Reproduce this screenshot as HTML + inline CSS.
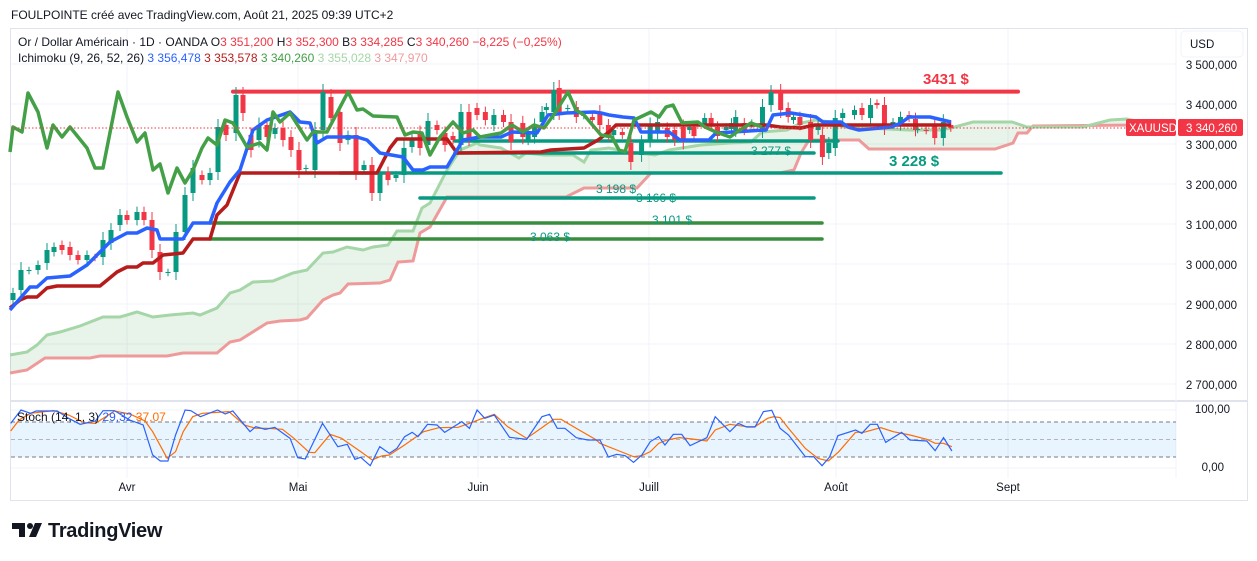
<!DOCTYPE html>
<html><head><meta charset="utf-8">
<style>
html,body{margin:0;padding:0;background:#fff;width:1257px;height:561px;overflow:hidden;font-family:"Liberation Sans",sans-serif;}
svg text{font-family:"Liberation Sans",sans-serif;}
</style></head><body>
<svg id="s" width="1257" height="561" viewBox="0 0 1257 561" xmlns="http://www.w3.org/2000/svg">
<text x="11" y="19" font-size="12" fill="#131722">FOULPOINTE créé avec TradingView.com, Août 21, 2025 09:39 UTC+2</text>
<rect x="10.5" y="28.5" width="1237" height="472" fill="#fff" stroke="#e0e3eb"/>
<g stroke="#f0f3fa" stroke-width="1">
<line x1="127" y1="29" x2="127" y2="478"/><line x1="298" y1="29" x2="298" y2="478"/><line x1="478" y1="29" x2="478" y2="478"/><line x1="649" y1="29" x2="649" y2="478"/><line x1="836" y1="29" x2="836" y2="478"/><line x1="1008" y1="29" x2="1008" y2="478"/>
<line x1="11" y1="64" x2="1176" y2="64"/><line x1="11" y1="104" x2="1176" y2="104"/><line x1="11" y1="144" x2="1176" y2="144"/><line x1="11" y1="184" x2="1176" y2="184"/><line x1="11" y1="224" x2="1176" y2="224"/><line x1="11" y1="264" x2="1176" y2="264"/><line x1="11" y1="304" x2="1176" y2="304"/><line x1="11" y1="344" x2="1176" y2="344"/><line x1="11" y1="384" x2="1176" y2="384"/>
<line x1="11" y1="410" x2="1176" y2="410"/><line x1="11" y1="468" x2="1176" y2="468"/>
</g>
<line x1="11" y1="401" x2="1247" y2="401" stroke="#e0e3eb" stroke-width="2"/>
<line x1="1176" y1="29" x2="1176" y2="478" stroke="#f0f3fa"/>
<g id="cloud"></g>
<g id="hl"></g>
<g id="cd"></g>
<g id="ln"></g>
<!-- stoch band -->
<rect x="11" y="422" width="1165" height="35" fill="rgba(33,150,243,0.1)"/>
<g stroke="#787b86" stroke-dasharray="4,3" stroke-width="1">
<line x1="11" y1="422" x2="1176" y2="422"/><line x1="11" y1="439.5" x2="1176" y2="439.5" stroke="#b2b5be"/><line x1="11" y1="457" x2="1176" y2="457"/>
</g>
<g id="st"></g>
<!-- price line -->
<line x1="11" y1="128" x2="1127" y2="128" stroke="#f23645" stroke-dasharray="1.5,2" stroke-width="1"/>
<rect x="1126" y="119" width="50" height="17" rx="2" fill="#f23645"/>
<text x="1129" y="132" font-size="11.5" fill="#fff">XAUUSD</text>
<rect x="1178" y="119" width="65" height="17" rx="2" fill="#f23645"/>
<text x="1186" y="132" font-size="11.5" fill="#fff">3 340,260</text>
<!-- axis -->
<rect x="1181" y="31" width="62" height="26" rx="4" fill="#fff" stroke="#f0f3fa"/>
<text x="1190" y="48" font-size="11.5" fill="#131722">USD</text>
<g font-size="11.5" fill="#131722" text-anchor="end">
<text x="1237" y="69">3 500,000</text><text x="1237" y="109">3 400,000</text><text x="1237" y="149">3 300,000</text><text x="1237" y="189">3 200,000</text><text x="1237" y="229">3 100,000</text><text x="1237" y="269">3 000,000</text><text x="1237" y="309">2 900,000</text><text x="1237" y="349">2 800,000</text><text x="1237" y="389">2 700,000</text>
<text x="1230" y="413">100,00</text><text x="1224" y="471">0,00</text>
</g>
<g font-size="11.5" fill="#131722" text-anchor="middle">
<text x="127" y="491">Avr</text><text x="298" y="491">Mai</text><text x="478" y="491">Juin</text><text x="649" y="491">Juill</text><text x="836" y="491">Août</text><text x="1008" y="491">Sept</text>
</g>
<!-- legend -->
<g font-size="12">
<text x="18" y="46" fill="#131722">Or / Dollar Américain · 1D · OANDA <tspan>O</tspan><tspan fill="#f23645">3 351,200</tspan> H<tspan fill="#f23645">3 352,300</tspan> B<tspan fill="#f23645">3 334,285</tspan> C<tspan fill="#f23645">3 340,260</tspan> <tspan fill="#f23645">−8,225 (−0,25%)</tspan></text>
<text x="18" y="62" fill="#131722">Ichimoku (9, 26, 52, 26) <tspan fill="#2962ff">3 356,478</tspan> <tspan fill="#b71c1c">3 353,578</tspan> <tspan fill="#43a047">3 340,260</tspan> <tspan fill="#a5d6a7">3 355,028</tspan> <tspan fill="#ef9a9a">3 347,970</tspan></text>
<text x="17" y="421" fill="#131722">Stoch (14, 1, 3) <tspan fill="#2962ff">29,32</tspan> <tspan fill="#ff6d00">37,07</tspan></text>
</g>
<!-- labels -->
<text x="923" y="84" font-size="15" font-weight="bold" fill="#f23645">3431 $</text>
<text x="889" y="166" font-size="15" font-weight="bold" fill="#089981">3 228 $</text>
<g font-size="12" fill="#089981">
<text x="751" y="155">3 277 $</text><text x="596" y="193">3 198 $</text><text x="636" y="202">3 166 $</text><text x="652" y="224">3 101 $</text><text x="530" y="241">3 063 $</text>
</g>
<!-- logo -->
<path d="M12 523h13v14h-6v-8h-7z" fill="#131722"/><circle cx="30" cy="526" r="3" fill="#131722"/><path d="M35 523h7l-6 14h-7z" fill="#131722"/>
<text x="48" y="537" font-size="20" font-weight="bold" fill="#131722" letter-spacing="-0.3">TradingView</text>
</svg>
<script>
var NS="http://www.w3.org/2000/svg";
function el(g,t,a){var e=document.createElementNS(NS,t);for(var k in a)e.setAttribute(k,a[k]);document.getElementById(g).appendChild(e);return e;}
function pts(a){var s=[];for(var i=0;i<a.length;i+=2)s.push(a[i]+","+a[i+1]);return s.join(" ");}
var A=[10,355,27,352,37,345,47,335,60,332,80,326,103,317,120,317,137,312,153,317,170,315,193,313,200,315,217,308,230,293,240,290,253,282,273,281,293,273,307,270,323,253,333,252,347,247,363,250,373,247,388,245,397,231,413,231,422,208,430,203,447,170,460,150,477,143,480,145,501,148,519,158,526,153,544,155,573,155,584,162,591,150,609,148,630,152,655,155,669,150,701,145,730,143,751,142,762,132,787,130,801,123,816,120,830,122,844,127,909,130,941,130,951,128,973,122,1012,122,1027,127,1083,127,1110,120,1127,119,1140,122];
var B=[10,373,27,370,45,358,90,358,100,356,167,356,183,353,217,353,230,342,240,340,267,323,280,321,300,320,307,318,323,300,333,295,340,293,348,284,380,283,390,280,398,262,413,261,420,233,430,227,447,197,480,197,566,197,584,188,637,188,651,173,780,173,794,170,801,153,809,140,859,140,869,149,995,149,1013,143,1018,133,1027,133,1033,126,1140,125];
var poly=A.slice();for(var i=B.length-2;i>=0;i-=2)poly.push(B[i],B[i+1]);
el("cloud","polygon",{points:pts(poly),fill:"rgba(67,160,71,0.12)"});
el("cloud","polyline",{points:pts(B),fill:"none",stroke:"#ef9a9a","stroke-width":3});
el("cloud","polyline",{points:pts(A),fill:"none",stroke:"#a5d6a7","stroke-width":3});
// horizontal lines
[[233,91.6,1018,"#f23645"],[455,141,838,"#089981"],[455,153,814,"#089981"],[340,173,1001,"#089981"],[420,198,814,"#089981"],[210,223,822,"#388e3c"],[210,239,822,"#388e3c"]].forEach(function(l){el("hl","line",{x1:l[0],y1:l[1],x2:l[2],y2:l[1],stroke:l[3],"stroke-width":l[3]=="#f23645"?4:3.5,"stroke-linecap":"round"});});
// candles [x,top,bottom,green]
var C=[[13,293,300,1],[21,270,290,1],[29,270,271,1],[38,265,270,1],[47,250,263,1],[54,247,252,1],[62,245,250,0],[70,247,255,0],[78,255,260,0],[87,255,260,1],[95,257,258,0],[103,240,257,1],[111,230,243,1],[120,215,225,1],[127,215,220,0],[137,212,220,1],[144,212,220,0],[152,220,250,0],[160,252,272,0],[168,272,273,1],[176,232,272,1],[185,195,232,1],[193,168,193,1],[202,175,180,0],[210,173,180,1],[218,127,172,1],[226,125,135,0],[236,95,133,1],[243,95,113,0],[251,135,150,0],[259,125,140,1],[267,125,137,0],[275,128,134,1],[283,128,140,0],[291,137,150,0],[299,150,170,0],[306,168,169,1],[315,130,170,1],[323,92,130,1],[331,97,118,0],[340,112,143,0],[348,135,140,1],[356,135,172,0],[364,165,170,1],[372,165,193,0],[380,173,193,1],[388,172,180,0],[396,175,178,1],[404,148,175,1],[412,138,147,1],[420,133,148,0],[428,121,145,1],[437,125,130,0],[445,133,145,0],[453,136,140,0],[461,112,145,1],[469,112,138,0],[477,108,115,0]];
var C2=[[485,112,120,0],[493,115,125,1],[502,115,122,0],[509,122,142,0],[520,123,137,0],[525,133,140,1],[531,125,137,1],[538,112,122,1],[542,107,110,1],[549,90,112,1],[554,88,112,0],[562,108,109,1],[570,107,117,0],[577,115,116,1],[585,117,120,0],[592,112,125,0],[600,125,135,0],[605,130,135,1],[613,132,135,0],[621,143,162,0],[631,142,155,1],[639,125,140,1],[646,122,133,1],[655,128,137,0],[662,130,140,0],[670,127,142,0],[676,127,130,1],[680,127,136,0],[690,118,124,1],[696,118,125,0],[702,127,136,0],[710,127,130,1],[715,123,129,1],[719,117,130,1],[727,123,130,0],[734,123,125,1],[744,107,130,1],[752,92,105,1],[761,92,110,0],[768,108,117,0],[773,117,120,1],[779,117,125,0],[789,122,140,0],[796,124,130,1],[800,135,157,0],[806,143,153,1],[812,118,148,1],[819,113,118,1],[830,110,115,1],[837,108,115,0],[845,105,118,1],[851,103,105,0],[858,105,127,0],[866,122,125,1],[873,117,125,1],[881,115,118,0],[887,119,130,0],[889,129,130,1],[897,130,131,0],[905,126,138,0],[913,122,138,1],[920,125,128,0]];
C2.forEach(function(c){c[0]=480+(c[0]-480)*1.07;});
C.concat(C2).forEach(function(c){var col=c[3]?"#089981":"#f23645";var h=c[2]-c[1];var w=Math.max(3,h*0.25);
el("cd","line",{x1:c[0],y1:c[1]-Math.min(8,3+h*0.3),x2:c[0],y2:c[2]+Math.min(8,3+h*0.3),stroke:col,"stroke-width":1});
el("cd","rect",{x:c[0]-2.5,y:c[1],width:5,height:Math.max(1,h),fill:col});});
// lines
var T=[10,310,30,287,37,287,47,278,70,276,87,265,110,242,127,233,137,233,147,228,157,230,160,239,183,239,193,223,210,223,217,203,230,182,240,170,253,130,267,120,290,112,300,122,310,123,317,143,327,137,357,137,367,140,380,153,403,157,413,170,423,170,430,167,447,167,463,140,480,137,501,137,512,132,537,133,548,115,566,113,594,112,601,113,609,115,623,117,634,118,641,132,669,132,680,140,709,140,716,133,766,130,773,115,791,113,816,117,823,122,841,122,848,127,859,130,891,127,901,123,909,117,930,117,951,122];
var K=[10,308,20,300,27,297,37,297,47,288,57,286,100,286,117,272,127,267,137,267,143,263,153,263,163,255,183,253,193,239,210,239,217,215,227,205,240,173,377,173,390,148,397,139,447,139,457,153,541,152,551,150,584,148,598,140,609,132,616,125,766,125,780,127,801,128,815,125,951,125];
var L=[10,152,13,127,22,132,28,93,38,112,47,148,53,125,62,137,70,127,87,148,95,168,103,168,118,92,127,117,137,142,145,133,153,170,160,164,168,193,177,168,185,183,193,170,202,148,208,138,217,145,225,120,233,123,247,147,260,143,267,150,273,112,280,122,290,113,307,140,313,132,327,132,337,113,348,92,357,110,363,109,373,116,397,117,405,135,413,132,422,133,430,155,440,137,453,122,463,133,473,130,480,137,501,133,512,125,523,132,534,125,544,128,555,113,568,92,576,110,584,115,601,135,612,137,619,150,625,152,634,120,651,112,659,117,666,107,673,105,682,123,698,122,705,127,716,132,730,137,737,132,751,123,762,127];
el("ln","polyline",{points:pts(K),fill:"none",stroke:"#b71c1c","stroke-width":3.5,"stroke-linejoin":"round"});
el("ln","polyline",{points:pts(T),fill:"none",stroke:"#2962ff","stroke-width":3.5,"stroke-linejoin":"round"});
el("ln","polyline",{points:pts(L),fill:"none",stroke:"#43a047","stroke-width":3.5,"stroke-linejoin":"round"});
// stoch
function conv(a,sx,ox){var r=[];for(var i=0;i<a.length;i+=2){r.push(ox+a[i]/sx,395+a[i+1]/3);}return r;}
var SB1=[28,85,55,45,80,55,95,48,150,48,180,70,210,88,250,78,270,47,300,47,340,75,375,90,400,180,420,198,440,198,460,120,485,45,500,47,525,65,570,45,590,57,610,48,655,110,670,95,695,103,720,97,760,130,780,188,800,192,845,85,885,155,910,148,930,193,945,187,970,212,995,155,1020,175,1040,160,1060,125,1080,112,1095,125,1120,88,1145,90,1165,112,1210,80,1230,100,1250,45,1270,70,1295,60,1335,127,1380,133,1420,65,1440,58,1460,100,1480,100,1510,128,1540,135,1568,135];
var SO1=[28,108,50,75,80,55,140,47,180,60,220,83,250,85,300,48,340,57,380,78,400,110,438,190,460,170,480,110,505,65,530,55,600,50,640,90,670,100,700,100,740,103,770,130,810,172,825,173,865,118,895,130,920,150,945,170,975,195,1000,183,1020,180,1060,150,1110,110,1150,98,1200,97,1230,85,1260,72,1295,58,1330,95,1380,130,1420,98,1450,73,1470,73,1510,100,1560,133];
var SB2=[0,135,20,186,40,178,60,182,80,202,100,180,120,140,140,125,155,150,175,118,195,118,215,152,255,128,275,65,310,110,330,85,350,96,370,96,390,50,410,46,430,100,450,120,490,185,510,185,530,212,548,186,568,122,610,105,625,115,645,88,662,88,682,142,720,112,740,135,780,138,800,167,820,128,840,168];
var SO2=[0,145,40,165,80,185,100,182,120,170,140,145,160,135,190,128,220,132,255,138,275,105,310,88,350,95,370,95,400,70,415,65,430,68,450,100,490,160,520,190,545,198,570,170,610,112,630,112,670,98,700,110,740,120,780,133,800,145,820,145,840,155];
var sb=conv(SB1,2.62,0).concat(conv(SB2,2.387,600)),so=conv(SO1,2.62,0).concat(conv(SO2,2.387,600));
el("st","polyline",{points:pts(so),fill:"none",stroke:"#ff6d00","stroke-width":1.2});
el("st","polyline",{points:pts(sb),fill:"none",stroke:"#2962ff","stroke-width":1.2});
</script>
</body></html>
